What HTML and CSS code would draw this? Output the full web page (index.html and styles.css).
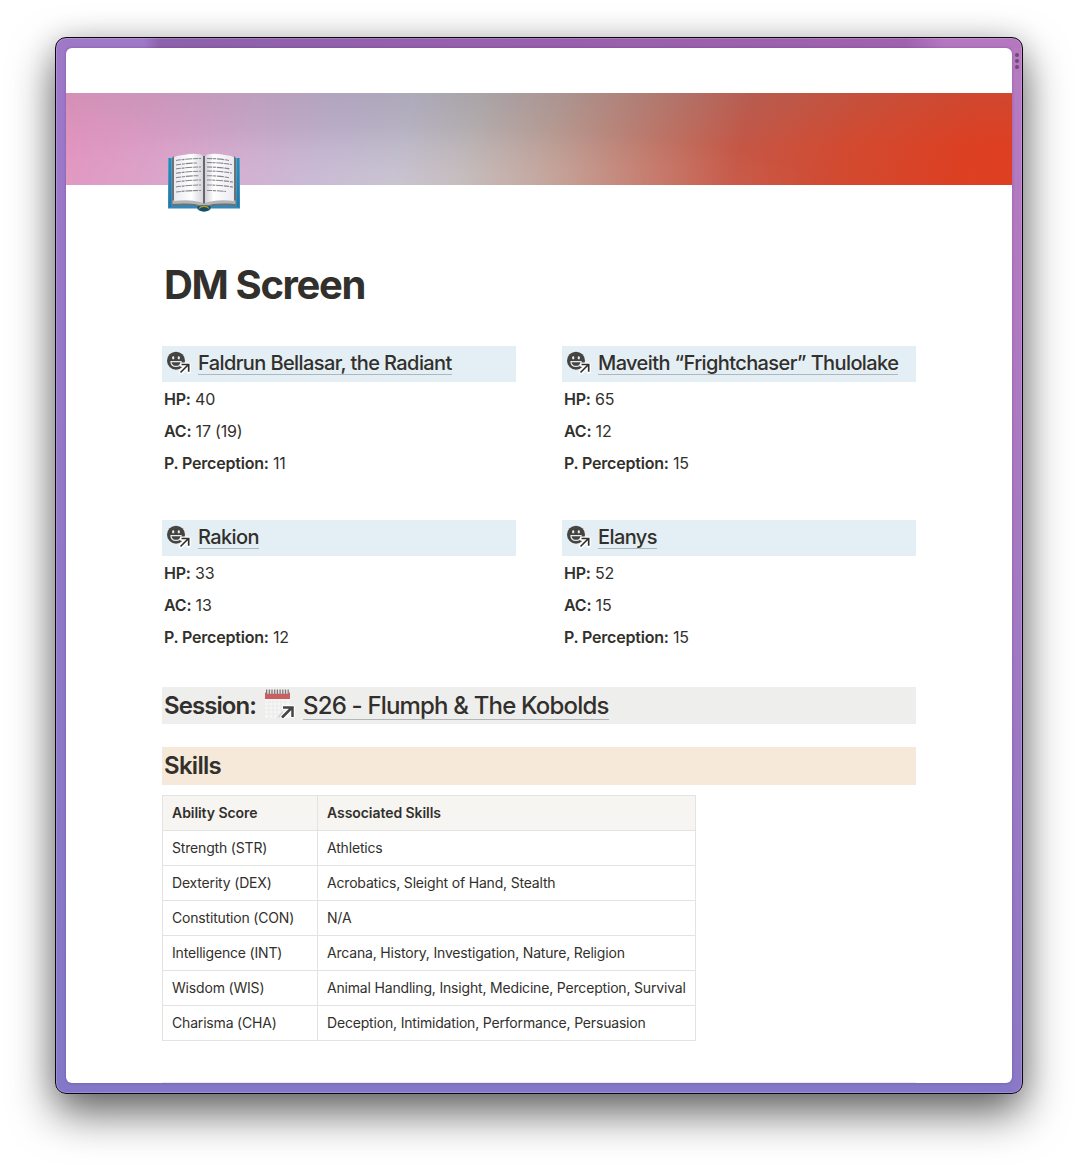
FILE: index.html
```html
<!DOCTYPE html>
<html lang="en">
<head>
<meta charset="utf-8">
<title>DM Screen</title>
<link rel="stylesheet" href="styles.css">
</head>
<body>
<svg class="defs" width="0" height="0" aria-hidden="true">
  <defs>
    <symbol id="face" viewBox="0 0 26 26">
      <circle cx="10" cy="10.700" r="9" fill="#454440"/>
      <rect x="6.200" y="6.300" width="2" height="3" rx=".9" fill="#e4eff5"/>
      <rect x="11.800" y="6.300" width="2" height="3" rx=".9" fill="#e4eff5"/>
      <path d="M4.900 11.700h10.300c-.2 3-2.300 4.700-5.100 4.700s-5-1.700-5.200-4.700z" fill="#454440" stroke="#e4eff5" stroke-width="1.200" stroke-linejoin="round"/>
      <path d="M15 22l7-7M16 14.700h6.700v6.700" fill="none" stroke="#fff" stroke-width="4.600" stroke-linecap="round" stroke-linejoin="round"/>
      <path d="M14.500 22.500l8-8M15.500 14.500h7.200v7.200" fill="none" stroke="#32302c" stroke-width="1.700"/>
    </symbol>
  </defs>
</svg>
<div class="window">
  <div class="grip"><i></i><i></i><i></i></div>
  <main class="page">
    <div class="cover"></div>
    <div class="content">
      <svg class="book" viewBox="0 0 74 62">
        <defs>
          <linearGradient id="pl"><stop offset="0" stop-color="#e9e9f0"/><stop offset=".6" stop-color="#fff"/><stop offset="1" stop-color="#d5d5dd"/></linearGradient>
          <linearGradient id="pr"><stop offset="0" stop-color="#d0d0d8"/><stop offset=".3" stop-color="#fff"/><stop offset="1" stop-color="#e9e9f0"/></linearGradient>
          <linearGradient id="blue" x2="0" y2="1"><stop offset="0" stop-color="#4ba6d2"/><stop offset="1" stop-color="#2f86b6"/></linearGradient>
        </defs>
        <path d="M1 5h72v50.500H44c-1 2-4 3-7 3s-6-1-7-3H1z" fill="url(#blue)"/>
        <path d="M3 5v49M71 5v49" stroke="#22658e" stroke-width="1"/>
        <path d="M5 5l2-2h60l2 2v45l-1 3c-12-1-20-1-29 1h-4c-9-2-17-2-29-1l-1-3z" fill="#6f7073"/>
        <path d="M5.500 47.500c12-1.500 22-1 30.500 2h2c8.500-3 18-3.500 30.500-2v3.500c-13-1-22-1-30 2h-3c-8-3-17-3-30-2z" fill="#b4b4b5"/>
        <path d="M7 3.500c11-2 19-4 27-2l2 1.500v47c-9-3-18-3.500-29-2z" fill="url(#pl)"/>
        <path d="M67 3.500c-11-2-19-4-27-2L38 3v47c9-3 18-3.500 29-2z" fill="url(#pr)"/>
        <path d="M36 3.500h2v47h-2z" fill="#66666b"/>
        <path d="M30 54c4-2.500 10-2.500 14 0-1 3-4 4.500-7 4.500s-6-1.500-7-4.500z" fill="#174d61"/>
        <path d="M32 55.500c2-3 8-3 10 0" fill="none" stroke="#b29b28" stroke-width="1.300"/>
        <g fill="none" stroke="#85858d" stroke-width="1.100" stroke-dasharray="5 .8 3 .8 7 .8">
          <path d="M9 7.500q12-2 25-2M9 12q12-2 21-2M9 16q12-2 25-2M9 20.300q12-2 25-2M9 24.700q12-2 23-2M9 29q12-2 25-2M9 34q12-2 25-2M9 39q12-1.500 25-1.500"/>
          <path d="M40 5.500q12 0 22 2M40 9.500q12 0 25 2M40 14q12 0 23 2M40 18q12 0 25 2M40 22.700q12 0 22 2M40 27q12 0 26 2M40 32q12 0 26 2M40 37.500q10 0 19 1"/>
        </g>
      </svg>
      <h1 class="title">DM Screen</h1>

      <div class="party">
        <section class="hero">
          <h3 class="name"><svg class="face"><use href="#face"/></svg><a class="link">Faldrun Bellasar, the Radiant</a></h3>
          <p class="stat"><b>HP:</b> 40</p>
          <p class="stat"><b>AC:</b> 17 (19)</p>
          <p class="stat"><b>P. Perception:</b> 11</p>
        </section>
        <section class="hero">
          <h3 class="name"><svg class="face"><use href="#face"/></svg><a class="link">Maveith “Frightchaser” Thulolake</a></h3>
          <p class="stat"><b>HP:</b> 65</p>
          <p class="stat"><b>AC:</b> 12</p>
          <p class="stat"><b>P. Perception:</b> 15</p>
        </section>
        <section class="hero">
          <h3 class="name"><svg class="face"><use href="#face"/></svg><a class="link">Rakion</a></h3>
          <p class="stat"><b>HP:</b> 33</p>
          <p class="stat"><b>AC:</b> 13</p>
          <p class="stat"><b>P. Perception:</b> 12</p>
        </section>
        <section class="hero">
          <h3 class="name"><svg class="face"><use href="#face"/></svg><a class="link">Elanys</a></h3>
          <p class="stat"><b>HP:</b> 52</p>
          <p class="stat"><b>AC:</b> 15</p>
          <p class="stat"><b>P. Perception:</b> 15</p>
        </section>
      </div>

      <h2 class="bar session"><span>Session:</span>
        <svg class="calendar" viewBox="0 0 32 32">
          <path d="M2 4h25v26H2z" fill="#f6f6f6"/>
          <path d="M2 14h25M2 18h25M2 22h25M2 26h25M6 11v19M10 11v19M14 11v19M18 11v19M22 11v19" stroke="#e8e8e8" stroke-width=".8"/>
          <path d="M2 4.500h25v6.500H2z" fill="#c9605f"/>
          <path d="M3 3.800h23" stroke="#e7dede" stroke-width="4"/>
          <path d="M3 3.800h23" stroke="#777" stroke-width="4.500" stroke-dasharray="1.200 1.500"/>
          <path d="M14 29.500l6-7v7z" fill="#d5d5d5"/>
          <path d="M20 28.500l8-7M21.500 19.500h8v8" fill="none" stroke="#fff" stroke-width="5" stroke-linecap="round" stroke-linejoin="round"/>
          <path d="M19 29.500l9.500-9.500M20 19.500h9.500v9.500" fill="none" stroke="#454545" stroke-width="2.500"/>
        </svg>
        <a class="link big">S26 - Flumph &amp; The Kobolds</a></h2>
      <h2 class="bar skills">Skills</h2>

      <table class="table">
        <thead><tr><th>Ability Score</th><th>Associated Skills</th></tr></thead>
        <tbody>
          <tr><td>Strength (STR)</td><td>Athletics</td></tr>
          <tr><td>Dexterity (DEX)</td><td>Acrobatics, Sleight of Hand, Stealth</td></tr>
          <tr><td>Constitution (CON)</td><td>N/A</td></tr>
          <tr><td>Intelligence (INT)</td><td>Arcana, History, Investigation, Nature, Religion</td></tr>
          <tr><td>Wisdom (WIS)</td><td>Animal Handling, Insight, Medicine, Perception, Survival</td></tr>
          <tr><td>Charisma (CHA)</td><td>Deception, Intimidation, Performance, Persuasion</td></tr>
        </tbody>
      </table>
      <div class="next"></div>
    </div>
  </main>
</div>
</body>
</html>
```
FILE: styles.css
```css
* { box-sizing: border-box; }
html { height: 100%; overflow: hidden; background: #fff; }
body {
  margin: 0;
  height: 1167px;
  padding: 37px 55px 73px;
  font-family: Inter, "Liberation Sans", sans-serif;
  color: #32302c;
  overflow: hidden;
}
h1, h2, h3, p { margin: 0; }
.defs { position: absolute; }
.window {
  position: relative;
  height: 1057px;
  padding: 10px;
  border: 1px solid #0b0612;
  border-radius: 11px;
  background:
    linear-gradient(90deg, #9f78c8 0, #9f78c8 88px, #8d61ac 104px, #9860ac 500px, #9f62ae 850px, #b578c0 890px, #b578c0 100%) top / 100% 10px no-repeat,
    linear-gradient(180deg, #b77ac1, #af79c2 30%, #8b78c6) right / 11px 100% no-repeat,
    linear-gradient(180deg, #9f78c8, #8378c7);
  box-shadow: 0 19px 44px rgba(0, 0, 0, .6), 0 0 28px rgba(0, 0, 0, .12), inset 0 0 0 1px rgba(255, 255, 255, .18);
}
.grip { position: absolute; right: 3px; top: 15px; display: grid; gap: 2px; }
.grip i { width: 4px; height: 4px; border-radius: 50%; background: #704879; }
.page {
  height: 1035px;
  padding-top: 45px;
  border-radius: 6px;
  background: #fff;
  overflow: hidden;
  box-shadow: 0 0 3px rgba(60, 20, 90, .3);
}
.cover {
  height: 92px;
  background:
    radial-gradient(ellipse 420px 80px at 45% 0, rgba(110, 110, 125, .14), transparent),
    radial-gradient(ellipse 420px 60px at 35% 100%, rgba(255, 240, 245, .18), transparent),
    linear-gradient(180deg, rgba(120, 120, 130, .13), transparent 60%) left / 100% 100% no-repeat,
    linear-gradient(104deg, #e293be 0, #da9cc5 10%, #cda9cc 20%, #c1b2cf 28%, #bebaca 36%, #bcb4b4 43%, #bd9f95 51%, #c17a6b 61%, #c65645 71%, #d24a30 82%, #dc4023 94%, #df3f22 100%);
}
.content { width: 754px; margin: -32px 0 0 96px; }
.book { display: block; width: 74px; height: 62px; margin-left: 5px; }
.title {
  margin: 46px 0 0 2px;
  font-size: 40px;
  line-height: 48px;
  font-weight: 700;
  letter-spacing: -1.35px;
}
.party { display: grid; grid-template-columns: 354px 354px; gap: 40px 46px; margin-top: 37px; }
.hero { height: 134px; }
.name {
  display: flex;
  height: 36px;
  padding: 4px 4px 0;
  background: #e4eff5;
  font-size: 20px;
  line-height: 26px;
  font-weight: 500;
}
.face { flex: none; width: 26px; height: 26px; margin-right: 6px; }
.link { height: 25px; border-bottom: 1px solid #b1b7b9; white-space: nowrap; letter-spacing: -.6px; }
.stat { padding: 4px 2px; height: 32px; font-size: 16px; line-height: 26px; letter-spacing: -.2px; }
.stat b { font-weight: 600; }
.bar { display: flex; padding-left: 2px; font-size: 24px; line-height: 31px; font-weight: 600; letter-spacing: -.92px; }
.session { height: 37px; margin-top: 33px; padding-top: 3px; background: #eeeeec; }
.calendar { flex: none; width: 32px; height: 32px; margin: -2px 8px 0 7px; }
.big { height: 30px; line-height: 31px; font-weight: 500; letter-spacing: -.82px; }
.skills { height: 38px; margin-top: 23px; padding-top: 3px; background: #f6e9d9; letter-spacing: -.7px; }
.table { width: 534px; margin-top: 10px; border-collapse: collapse; table-layout: fixed; font-size: 14px; }
.table th, .table td {
  height: 35px;
  padding: 0 9px;
  border: 1px solid #e3e3e1;
  text-align: left;
  font-weight: 400;
  line-height: 20px;
  letter-spacing: -.18px;
  white-space: nowrap;
}
.table th { background: #f6f5f1; font-weight: 600; letter-spacing: -.06px; }
.table th:first-child { width: 155px; }
.next { height: 38px; margin-top: 41px; background: #f6e9d9; }
```
